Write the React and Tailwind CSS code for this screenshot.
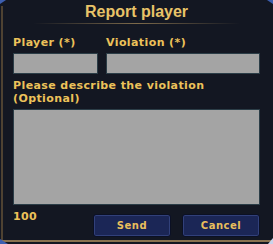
import React from 'react';

const font = { fontFamily: '"DejaVu Sans", Verdana, sans-serif' };

function Field({ className }) {
  return <div className={`bg-[#a4a4a4] border border-[#2b3d47] ${className}`} />;
}

function GameButton({ children }) {
  return (
    <button className="w-[78px] h-[23px] rounded-[3px] border border-[#0b1024] bg-[#1b2656] shadow-[inset_0_0_0_1px_#31407a] text-[10px] font-bold tracking-[0.5px] text-[#e9bf5c] leading-none">
      {children}
    </button>
  );
}

export default function App() {
  return (
    <div className="relative w-[273px] h-[244px] overflow-hidden bg-[#131722]" style={font}>
      {/* frame decoration */}
      <div className="absolute left-[1px] top-[6px] bottom-[3px] w-[2px] bg-[#4e4232]" />
      <div className="absolute left-0 right-0 bottom-[2px] h-[2px] bg-[#8a7250]" />
      <div className="absolute left-0 top-0 w-[6px] h-[4px] bg-[#3d5fb0] [clip-path:polygon(0_0,100%_0,0_100%)]" />
      <div className="absolute right-0 top-0 w-[6px] h-[4px] bg-[#3d5fb0] [clip-path:polygon(0_0,100%_0,100%_100%)]" />
      <div className="absolute left-0 bottom-0 w-[8px] h-[5px] bg-[#3d5fb0] [clip-path:polygon(0_100%,100%_100%,0_0)]" />
      <div className="absolute right-0 bottom-0 w-[5px] h-[6px] bg-[#c8d4ec] [clip-path:polygon(100%_0,100%_100%,0_100%)]" />

      <div className="flex flex-col px-[13px]">
        <div
          className="h-[23px] pt-[3px] text-center text-[16px] font-bold leading-[18px] text-[#e8c368]"
          style={{ fontFamily: '"Liberation Sans", Arial, sans-serif' }}
        >
          Report player
        </div>
        <div className="mx-[20px] h-px bg-gradient-to-r from-transparent via-[#7d6a4a] to-transparent" />

        <div className="mt-[13px] flex gap-[8px] text-[11px] font-bold tracking-[0.4px] leading-[12px] text-[#ecc25a]">
          <div className="w-[85px]">Player (*)</div>
          <div>Violation (*)</div>
        </div>
        <div className="mt-[4px] flex gap-[8px]">
          <Field className="w-[85px] h-[21px]" />
          <Field className="flex-1 h-[21px]" />
        </div>

        <div className="mt-[5px] text-[11px] font-bold tracking-[0.4px] leading-[13px] text-[#ecc25a]">
          Please describe the violation
          <br />
          (Optional)
        </div>
        <Field className="mt-[4px] h-[96px]" />

        <div className="mt-[9px] flex items-start">
          <div className="-mt-[3px] text-[11px] font-bold tracking-[0.4px] leading-[12px] text-[#ecc25a]">100</div>
          <div className="ml-auto flex gap-[11px]">
            <GameButton>Send</GameButton>
            <GameButton>Cancel</GameButton>
          </div>
        </div>
      </div>
    </div>
  );
}
